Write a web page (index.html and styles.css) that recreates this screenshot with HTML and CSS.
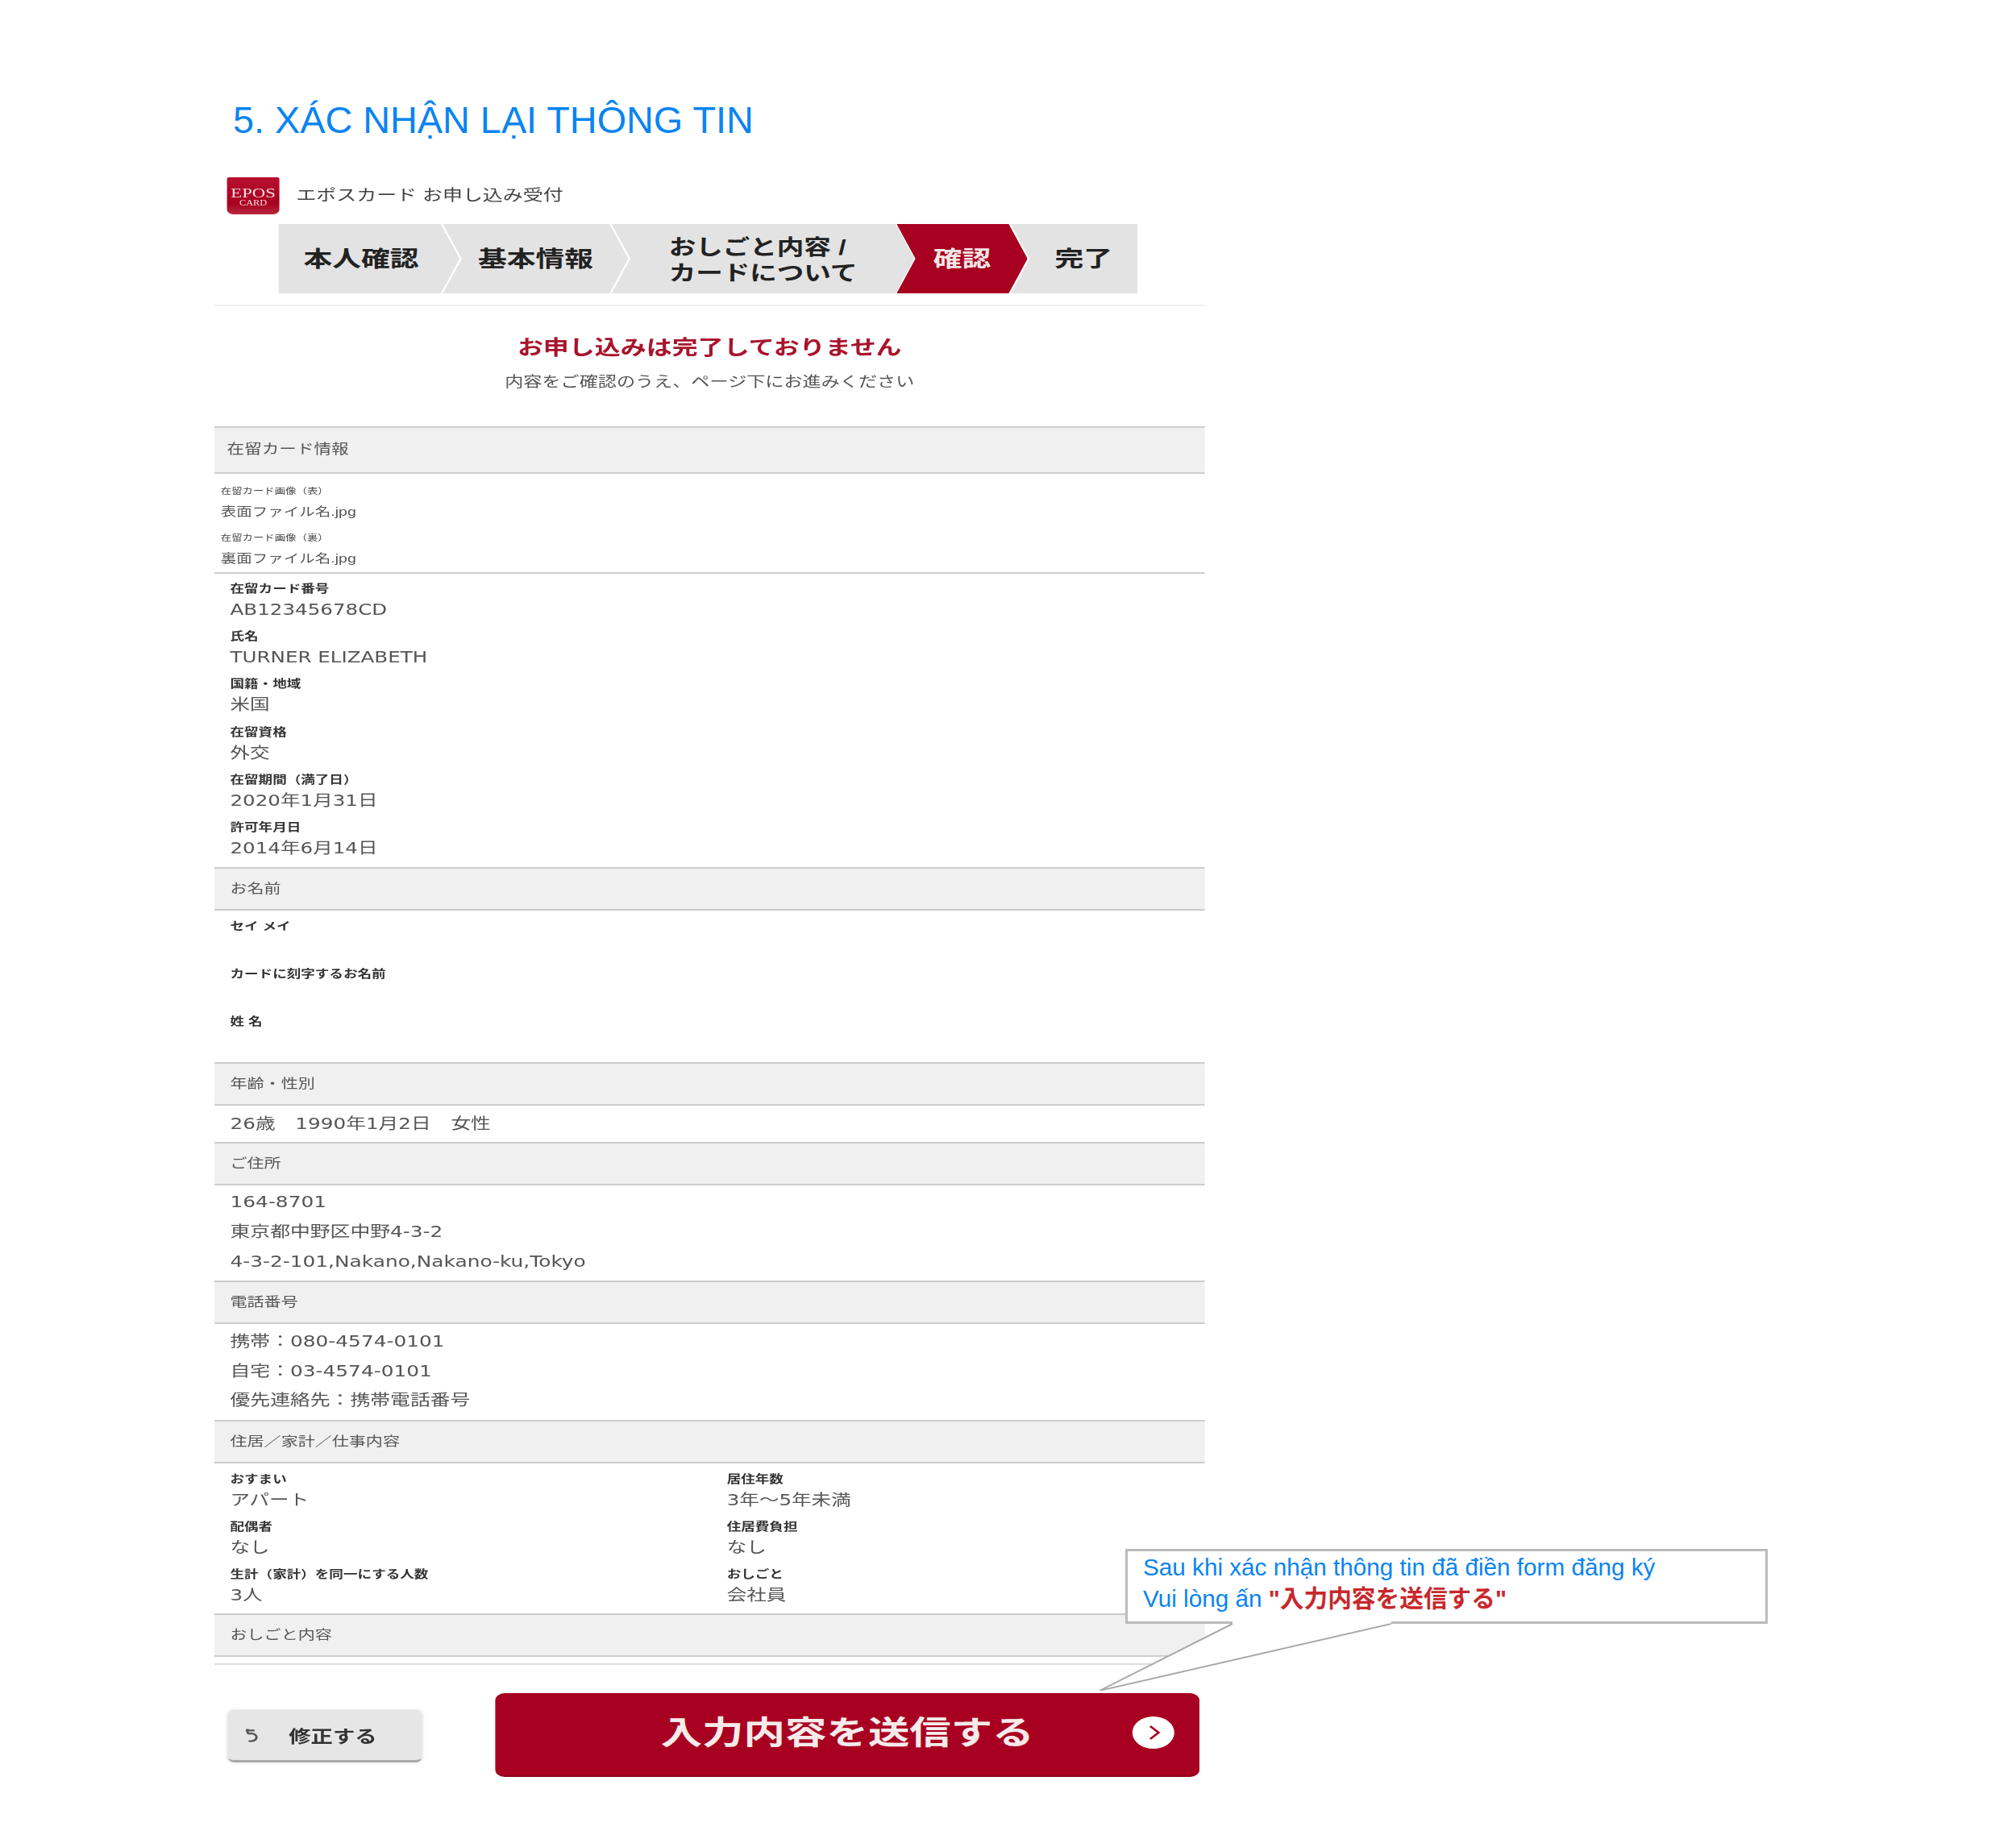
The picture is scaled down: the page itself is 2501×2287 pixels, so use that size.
FILE: index.html
```html
<!DOCTYPE html>
<html lang="ja">
<head>
  <meta charset="UTF-8">
  <meta name="viewport" content="width=device-width, initial-scale=1.0">
  <title>5. XÁC NHẬN LẠI THÔNG TIN</title>
  <link rel="stylesheet" href="styles.css">
</head>
<body>
  <div class="page">
    <h1 class="page-title">5. XÁC NHẬN LẠI THÔNG TIN</h1>

    <div class="shot">
      <div class="brand">
        <div class="brand-logo">
          <span class="brand-logo-main">EPOS</span>
          <span class="brand-logo-sub">CARD</span>
        </div>
        <div class="brand-name">エポスカード お申し込み受付</div>
      </div>

      <div class="steps">
        <div class="step step1">本人確認</div>
        <div class="step step2">基本情報</div>
        <div class="step step3">おしごと内容 /<br>カードについて</div>
        <div class="step step4">確認</div>
        <div class="step step5">完了</div>
      </div>
      <div class="steps-rule"></div>

      <div class="notice">
        <div class="notice-title">お申し込みは完了しておりません</div>
        <div class="notice-text">内容をご確認のうえ、ページ下にお進みください</div>
      </div>

      <div class="sec-head sec-head-first">在留カード情報</div>
      <div class="files">
        <div class="file">
          <div class="file-label">在留カード画像（表）</div>
          <div class="file-name">表面ファイル名.jpg</div>
        </div>
        <div class="file">
          <div class="file-label">在留カード画像（裏）</div>
          <div class="file-name">裏面ファイル名.jpg</div>
        </div>
      </div>
      <div class="fields fields-card">
        <div class="field"><div class="label">在留カード番号</div><div class="value">AB12345678CD</div></div>
        <div class="field"><div class="label">氏名</div><div class="value">TURNER ELIZABETH</div></div>
        <div class="field"><div class="label">国籍・地域</div><div class="value">米国</div></div>
        <div class="field"><div class="label">在留資格</div><div class="value">外交</div></div>
        <div class="field"><div class="label">在留期間（満了日）</div><div class="value">2020年1月31日</div></div>
        <div class="field"><div class="label">許可年月日</div><div class="value">2014年6月14日</div></div>
      </div>

      <div class="sec-head">お名前</div>
      <div class="fields fields-name">
        <div class="field"><div class="label">セイ メイ</div></div>
        <div class="field"><div class="label">カードに刻字するお名前</div></div>
        <div class="field"><div class="label">姓 名</div></div>
      </div>

      <div class="sec-head">年齢・性別</div>
      <div class="plain-row">26歳　1990年1月2日　女性</div>

      <div class="sec-head">ご住所</div>
      <div class="lines">
        <div>164-8701</div>
        <div>東京都中野区中野4-3-2</div>
        <div>4-3-2-101,Nakano,Nakano-ku,Tokyo</div>
      </div>

      <div class="sec-head">電話番号</div>
      <div class="lines">
        <div>携帯：080-4574-0101</div>
        <div>自宅：03-4574-0101</div>
        <div>優先連絡先：携帯電話番号</div>
      </div>

      <div class="sec-head">住居／家計／仕事内容</div>
      <div class="fields fields-two">
        <div class="field"><div class="label">おすまい</div><div class="value">アパート</div></div>
        <div class="field"><div class="label">居住年数</div><div class="value">3年〜5年未満</div></div>
        <div class="field"><div class="label">配偶者</div><div class="value">なし</div></div>
        <div class="field"><div class="label">住居費負担</div><div class="value">なし</div></div>
        <div class="field"><div class="label">生計（家計）を同一にする人数</div><div class="value">3人</div></div>
        <div class="field"><div class="label">おしごと</div><div class="value">会社員</div></div>
      </div>

      <div class="sec-head">おしごと内容</div>
      <div class="end-rule"></div>

      <div class="actions">
        <div class="btn-back">
          <svg class="btn-back-icon" viewBox="0 0 16 18" fill="none" stroke="#555" stroke-width="2.4">
            <path d="M2 3h9"/>
            <path d="M4 1v6"/>
            <path d="M4 7h4a5 5 0 0 1 0 10H5"/>
          </svg>
          <span>修正する</span>
        </div>
        <div class="btn-submit">
          <span>入力内容を送信する</span>
          <div class="btn-submit-arrow">
            <svg viewBox="0 0 24 24" fill="none" stroke="#a80020" stroke-width="2.4">
              <path d="M9 4l8 8-8 8"/>
            </svg>
          </div>
        </div>
      </div>
    </div>

    <svg class="callout-tail" viewBox="0 0 362 86">
      <polygon points="165,0 165,3 0,86 362,3 362,0" fill="#fff"/>
      <polyline points="165,3 0,86 362,3" fill="none" stroke="#aaa" stroke-width="2"/>
    </svg>
    <div class="callout">
      <div>Sau khi xác nhận thông tin đã điền form đăng ký</div>
      <div>Vui lòng ấn <b class="callout-red">"入力内容を送信する"</b></div>
    </div>
  </div>
</body>
</html>
```

FILE: styles.css
```css
body {
  margin: 0;
  background-color: #fff;
  font-family: "Liberation Sans", "Noto Sans CJK JP", sans-serif;
}
.page {
  position: relative;
  width: 2501px;
  height: 2287px;
  overflow: hidden;
}
.page-title {
  margin: 119px 0 41px 289px;
  font-size: 46.8px;
  line-height: 60px;
  font-weight: normal;
  color: #0a84f0;
}

/* the pasted form is a screenshot stretched sideways */
.shot {
  width: 945px;
  margin-left: 266px;
  transform: scale(1.3, 1);
  transform-origin: 0 0;
  color: #555;
  filter: blur(0.5px);
}

.brand {
  display: flex;
  align-items: center;
  height: 46px;
  padding-left: 12px;
}
.brand-logo {
  width: 50px;
  height: 46px;
  border-radius: 2px 2px 6px 6px;
  background: linear-gradient(#b8102f, #a80020 70%, #b8283f);
  color: #f3dfe0;
  text-align: center;
  font-family: "Liberation Serif", serif;
}
.brand-logo-main {
  display: block;
  margin-top: 11px;
  font-size: 17.5px;
  line-height: 16px;
}
.brand-logo-sub {
  display: block;
  font-size: 9.5px;
  line-height: 10px;
}
.brand-name {
  margin: 0 0 5px 16px;
  font-size: 19.2px;
  color: #444;
}

.steps {
  display: flex;
  height: 86px;
  margin-top: 12px;
  padding-left: 61px;
}
.step {
  display: flex;
  align-items: center;
  justify-content: center;
  box-sizing: border-box;
  margin-left: -16px;
  padding: 2px 18px 0;
  background-color: #e3e3e3;
  color: #222;
  font-size: 27.5px;
  line-height: 32px;
  font-weight: bold;
  clip-path: polygon(0 0, calc(100% - 18px) 0, 100% 50%, calc(100% - 18px) 100%, 0 100%, 18px 50%);
}
.step1 {
  width: 173px;
  margin-left: 0;
  padding-left: 3px;
  clip-path: polygon(0 0, calc(100% - 18px) 0, 100% 50%, calc(100% - 18px) 100%, 0 100%);
}
.step2 {
  width: 177px;
}
.step3 {
  width: 289px;
  padding-top: 3px;
  font-size: 25.8px;
}
.step4 {
  width: 125px;
  margin-left: -17px;
  background-color: #a80020;
  color: #f4e6e6;
}
.step5 {
  width: 121px;
  padding-right: 0;
  clip-path: polygon(0 0, 100% 0, 100% 100%, 0 100%, 18px 50%);
}
.steps-rule {
  height: 2px;
  margin-top: 14px;
  background-color: #f0f0f0;
}

.notice {
  height: 149px;
  text-align: center;
}
.notice-title {
  padding-top: 36px;
  font-size: 24.6px;
  line-height: 32px;
  font-weight: bold;
  color: #a8142c;
}
.notice-text {
  margin-top: 14px;
  font-size: 17.8px;
  line-height: 24px;
  color: #555;
}

.sec-head {
  box-sizing: border-box;
  height: 54px;
  padding-left: 15px;
  border-top: 2px solid #ccc;
  border-bottom: 2px solid #ccc;
  background-color: #f0f0f0;
  font-size: 16.2px;
  line-height: 49px;
  color: #555;
}
.sec-head-first {
  height: 59px;
  padding-left: 12px;
  line-height: 53px;
  font-size: 16.6px;
}

.files {
  padding: 12px 0 0 6px;
  height: 110px;
  border-bottom: 2px solid #ccc;
}
.file {
  height: 58px;
}
.file-label {
  font-size: 10.3px;
  line-height: 20px;
  color: #444;
}
.file-name {
  font-size: 15px;
  line-height: 30px;
}

.fields {
  display: grid;
  row-gap: 9.2px;
  padding-left: 15px;
}
.fields-card {
  padding-top: 9px;
  padding-bottom: 9px;
}
.fields-name {
  padding-top: 10px;
  padding-bottom: 9.2px;
}
.fields-two {
  grid-template-columns: 474px 1fr;
  padding-top: 10px;
  padding-bottom: 7.6px;
}
.field {
  height: 50px;
}
.label {
  font-size: 13.5px;
  line-height: 20px;
  font-weight: bold;
  color: #333;
}
.value {
  font-family: "DejaVu Sans", "Noto Sans CJK JP", sans-serif;
  font-size: 18.9px;
  line-height: 31px;
}

.plain-row {
  height: 45.4px;
  padding-left: 15px;
  font-family: "DejaVu Sans", "Noto Sans CJK JP", sans-serif;
  font-size: 19px;
  line-height: 45px;
}
.lines {
  padding: 3.5px 0 4.5px 15px;
  font-family: "DejaVu Sans", "Noto Sans CJK JP", sans-serif;
  font-size: 19.1px;
  line-height: 36.8px;
}
.end-rule {
  height: 2px;
  margin-top: 8px;
  background-color: #ddd;
}

.actions {
  display: flex;
  align-items: center;
  column-gap: 70px;
  height: 104px;
  margin-top: 35px;
  padding-left: 13px;
}
.btn-back {
  display: flex;
  align-items: center;
  box-sizing: border-box;
  width: 185px;
  height: 65px;
  margin-top: 3px;
  padding-left: 15px;
  border-radius: 6px;
  border-bottom: 3px solid #aaa;
  background-color: #e6e6e6;
  box-shadow: 0 0 4px #ddd;
  font-size: 21px;
  font-weight: bold;
  color: #333;
}
.btn-back-icon {
  width: 15px;
  height: 18px;
  margin-right: 28px;
}
.btn-submit {
  position: relative;
  box-sizing: border-box;
  width: 672px;
  height: 104px;
  border-radius: 9px;
  border-bottom: 2px solid #8a001a;
  background-color: #a80020;
  color: #f6eaea;
  text-align: center;
  font-size: 39.6px;
  line-height: 98px;
  font-weight: bold;
}
.btn-submit-arrow {
  position: absolute;
  top: 29px;
  right: 24px;
  width: 40px;
  height: 40px;
  border-radius: 50%;
  background-color: #fff;
}
.btn-submit-arrow svg {
  display: block;
  width: 24px;
  height: 24px;
  margin: 8px;
}

.callout {
  position: absolute;
  top: 1922px;
  left: 1396px;
  box-sizing: border-box;
  width: 797px;
  height: 93px;
  padding-left: 19px;
  border: 3px solid #bbb;
  background-color: #fff;
  font-size: 29.7px;
  line-height: 39px;
  color: #0a84f0;
}
.callout-red {
  color: #c8282d;
}
.callout-tail {
  position: absolute;
  top: 2012px;
  left: 1364px;
  z-index: 1;
  width: 362px;
  height: 86px;
}
```
